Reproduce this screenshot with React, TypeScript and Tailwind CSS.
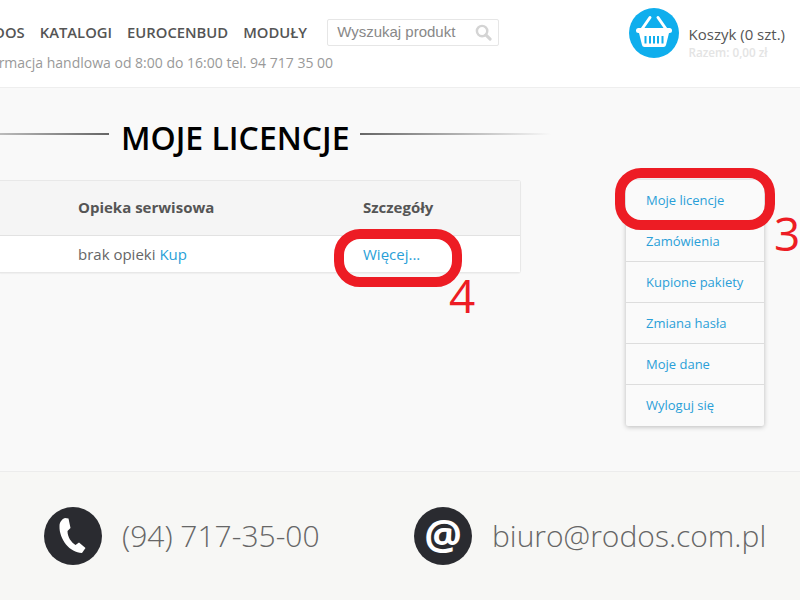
import React from "react";

const menu = ["Moje licencje", "Zamówienia", "Kupione pakiety", "Zmiana hasła", "Moje dane", "Wyloguj się"];

const BasketIcon = () => (
  <svg viewBox="0 0 50 50" className="w-[50px] h-[50px]">
    <circle cx="25" cy="25" r="25" fill="#0faeed" />
    <path d="M13 21 L21 9.5 M37 21 L29 9.5" stroke="#fff" strokeWidth="3" strokeLinecap="round" fill="none" />
    <rect x="7" y="20" width="36" height="5" rx="2.5" fill="#fff" />
    <path d="M10 25 H40 L37 37 Q36.6 39 34.5 39 H15.5 Q13.4 39 13 37 Z" fill="#fff" />
    <path d="M16.5 28 V35.5 M21 28 V35.5 M25 28 V35.5 M29 28 V35.5 M33.5 28 V35.5" stroke="#0faeed" strokeWidth="2" fill="none" />
  </svg>
);

const PhoneIcon = () => (
  <svg viewBox="0 0 58 58" className="w-[58px] h-[58px]">
    <circle cx="29" cy="29" r="29" fill="#2a2b30" />
    <path
      d="M21 11 L24.5 11.5 L26.5 21 L23.5 24 C23.5 30 27 35 31.5 38 L35 35.5 L41.5 41 L38 46 C26 46 15 32 15.5 19 C15.5 15 18 12 21 11 Z"
      fill="#fff"
    />
  </svg>
);

const App: React.FC = () => {
  return (
    <div className="w-[800px] h-[600px] overflow-hidden bg-[#f9f9f9] font-['Open_Sans',sans-serif] relative">
      {/* Header */}
      <header className="h-[88px] bg-white border-b border-[#eeeeee] flex justify-between">
        <div className="-ml-[27px] pt-[19px]">
          <div className="flex items-center h-[26px]">
            <nav className="flex gap-[15px] text-[14.8px] font-semibold text-[#555555] uppercase whitespace-nowrap">
              <span>Rodos</span>
              <span>Katalogi</span>
              <span>Eurocenbud</span>
              <span>Moduły</span>
            </nav>
            <div className="ml-[20px] w-[172px] h-[27px] border border-[#e6e6e6] rounded-[2px] flex items-center justify-between pl-[9px] pr-[6px]">
              <span className="text-[15px] text-[#888888] font-['Liberation_Sans',sans-serif]">Wyszukaj produkt</span>
              <svg viewBox="0 0 18 18" className="w-[17px] h-[17px]">
                <circle cx="7.5" cy="7.5" r="5.5" fill="none" stroke="#d4d4d4" strokeWidth="2.6" />
                <path d="M11.5 11.5 L16 16" stroke="#d4d4d4" strokeWidth="3.2" strokeLinecap="round" />
              </svg>
            </div>
          </div>
          <p className="mt-[8px] text-[14px] leading-[20px] text-[#999999] whitespace-nowrap">
            Informacja handlowa od 8:00 do 16:00 tel. 94 717 35 00
          </p>
        </div>
        <div className="flex items-start pt-[8px] pr-[15px]">
          <BasketIcon />
          <div className="ml-[10px] pt-[16px]">
            <p className="text-[15px] leading-[20px] text-[#555555] whitespace-nowrap">Koszyk (0 szt.)</p>
            <p className="mt-[1px] text-[11.7px] leading-[14px] font-semibold text-[#e4e4e4]">Razem: 0,00 zł</p>
          </div>
        </div>
      </header>

      {/* Content */}
      <main className="h-[384px] flex border-b border-[#ececec]">
        <div className="w-[521px] shrink-0">
          <div className="h-[92px] pt-[8px] flex items-center">
            <div className="w-[109px] h-[2px] -mt-[9px] shrink-0 bg-gradient-to-r from-[#bbbbbb] to-[#666666]" />
            <h1 className="ml-[12px] text-[32px] leading-[40px] font-semibold text-black whitespace-nowrap">MOJE LICENCJE</h1>
            <div className="ml-[10px] w-[191px] h-[2px] -mt-[9px] shrink-0 bg-gradient-to-r from-[#666666] to-transparent" />
          </div>
          <div className="border border-l-0 border-[#e8e8e8] rounded-r-[3px] text-[15px] shadow-[0_1px_1px_rgba(0,0,0,0.04)]">
            <div className="h-[55px] pb-[2px] bg-[#f5f5f5] border-b border-[#e2e2e2] flex items-center font-bold text-[#555555]">
              <span className="ml-[78px] w-[285px]">Opieka serwisowa</span>
              <span>Szczegóły</span>
            </div>
            <div className="h-[36px] bg-white flex items-center text-[#666666]">
              <span className="ml-[78px] w-[285px]">
                brak opieki <span className="text-[#2a9fd8]">Kup</span>
              </span>
              <span className="text-[#2a9fd8]">Więcej...</span>
            </div>
          </div>
        </div>
        <aside className="ml-[105px] mt-[92px] w-[138px] h-[246px] bg-[#fafafa] rounded-[2px] shadow-[0_1px_5px_rgba(0,0,0,0.25)] flex flex-col">
          {menu.map((item, i) => (
            <div
              key={item}
              className={`h-[41px] flex items-center pl-[20px] text-[13px] text-[#2a9fd8] ${i < menu.length - 1 ? "pt-[1px] border-b border-[#dddddd]" : ""}`}
            >
              {item}
            </div>
          ))}
        </aside>
      </main>

      {/* Footer */}
      <footer className="h-[128px] bg-[#f7f7f5] flex items-start pt-[35px] pl-[44px]">
        <PhoneIcon />
        <span className="ml-[20px] w-[292px] text-[30px] leading-[58px] font-light text-[#666666] whitespace-nowrap">(94) 717-35-00</span>
        <div className="w-[58px] h-[58px] rounded-full bg-[#2a2b30] flex items-center justify-center">
          <span className="text-[42px] leading-none font-bold text-white -mt-[5px]">@</span>
        </div>
        <span className="ml-[20px] text-[30px] leading-[58px] font-light text-[#666666] whitespace-nowrap">biuro@rodos.com.pl</span>
      </footer>

      {/* Red annotations over the screenshot */}
      <div className="absolute left-[615px] top-[168px] w-[160px] h-[62px] border-[10px] border-[#ed1c24] rounded-[26px]" />
      <span className="absolute left-[774px] top-[201px] text-[46px] leading-[64px] text-[#ed1c24]">3</span>
      <div className="absolute left-[334px] top-[229px] w-[128px] h-[58px] border-[10px] border-[#ed1c24] rounded-[26px]" />
      <span className="absolute left-[449px] top-[263px] text-[46px] leading-[64px] text-[#ed1c24]">4</span>
    </div>
  );
};

export default App;
